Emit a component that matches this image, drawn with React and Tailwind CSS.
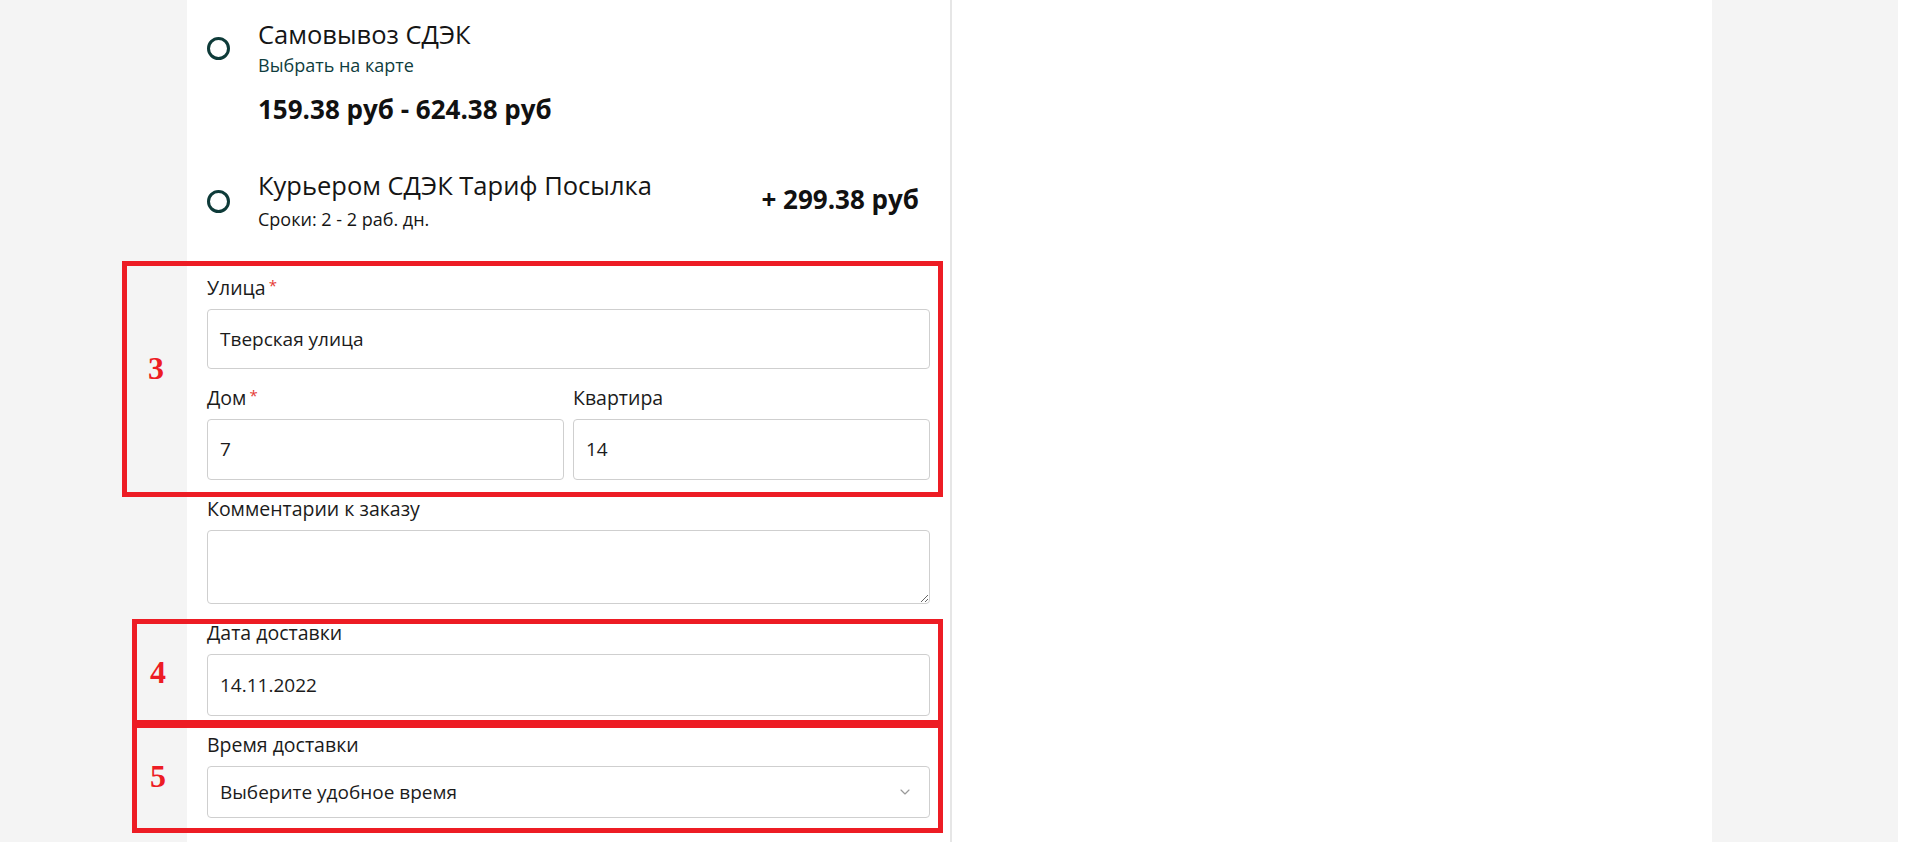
import { ChevronDown } from "lucide-react";

const font = { fontFamily: '"Open Sans", "Noto Sans", sans-serif' };

function Radio() {
  return <span className="block h-[23px] w-[23px] shrink-0 rounded-full border-[3px] border-[#0e3b39]" />;
}

function Label({ children, required }) {
  return (
    <div className="mb-[9px] flex h-6 items-center text-[19.5px] text-[#1b1b1b]">
      {children}
      {required && <span className="ml-[3px] -mt-[6px] text-[15px] text-[#e53935]">*</span>}
    </div>
  );
}

function Field({ label, required, value, className = "h-[60px]" }) {
  return (
    <div>
      <Label required={required}>{label}</Label>
      <div className={`flex items-center rounded-[4px] border border-[#cfcfcf] bg-white px-3 text-[19px] text-[#1b1b1b] ${className}`}>
        {value}
      </div>
    </div>
  );
}

function Marker({ n, className, numClass }) {
  return (
    <div className={`pointer-events-none absolute border-[5px] border-[#ed1c24] ${className}`}>
      <span
        className={`absolute top-1/2 -translate-y-1/2 text-[32px] font-bold leading-none text-[#ed1c24] ${numClass}`}
        style={{ fontFamily: '"Liberation Serif", serif' }}
      >
        {n}
      </span>
    </div>
  );
}

export default function App() {
  return (
    <div className="relative flex h-[842px] w-full overflow-hidden bg-[#f4f4f4]" style={font}>
      <div className="w-[187px] shrink-0" />

      {/* delivery form */}
      <div className="w-[765px] shrink-0 border-r-2 border-[#e6e6e6] bg-white px-5">
        <div className="flex items-center gap-7 pt-5">
          <Radio />
          <div>
            <div className="h-7 text-[25.5px] leading-7 text-[#151515]">Самовывоз СДЭК</div>
            <div className="mt-[5px] h-6 text-[18px] leading-6 text-[#0f3d3e]">Выбрать на карте</div>
          </div>
        </div>
        <div className="mt-[17px] pl-[51px] text-[26px] font-bold leading-[30px] text-[#111]">
          159.38 руб - 624.38 руб
        </div>

        <div className="mt-[47px] flex items-center pr-[11px]">
          <Radio />
          <div className="ml-7 flex-1">
            <div className="h-7 text-[25.5px] leading-7 text-[#151515]">Курьером СДЭК Тариф Посылка</div>
            <div className="mt-2 h-6 text-[18px] leading-6 text-[#151515]">Сроки: 2 - 2 раб. дн.</div>
          </div>
          <div className="-mt-1 text-[26px] font-bold text-[#111]">+ 299.38 руб</div>
        </div>

        <div className="mt-[45px] flex flex-col gap-[17px]">
          <Field label="Улица" required value="Тверская улица" />
          <div className="grid grid-cols-2 gap-[9px]">
            <Field label="Дом" required value="7" className="h-[61px]" />
            <Field label="Квартира" value="14" className="h-[61px]" />
          </div>
          <div>
            <Label>Комментарии к заказу</Label>
            <textarea className="block h-[74px] w-full rounded-[4px] border border-[#cfcfcf] bg-white px-3 py-2 text-[19px] outline-none" />
          </div>
          <Field label="Дата доставки" value="14.11.2022" className="h-[62px]" />
          <div>
            <Label>Время доставки</Label>
            <div className="flex h-[52px] items-center justify-between rounded-[4px] border border-[#cfcfcf] bg-white pl-3 pr-4 text-[19px] text-[#1b1b1b]">
              Выберите удобное время
              <ChevronDown className="h-4 w-4 text-[#9a9a9a]" strokeWidth={1.75} />
            </div>
          </div>
        </div>
      </div>

      <div className="flex-1 bg-white" />
      <div className="w-[186px] shrink-0 bg-[#f4f4f4]" />
      <div className="w-[20px] shrink-0 bg-white" />

      <Marker n="3" numClass="left-[21px] -mt-[11px]" className="left-[122px] top-[261px] h-[236px] w-[821px]" />
      <Marker n="4" numClass="left-[13px]" className="left-[132px] top-[619px] h-[106px] w-[811px]" />
      <Marker n="5" numClass="left-[13px] -mt-[2px]" className="left-[132px] top-[723px] h-[110px] w-[811px]" />
    </div>
  );
}
